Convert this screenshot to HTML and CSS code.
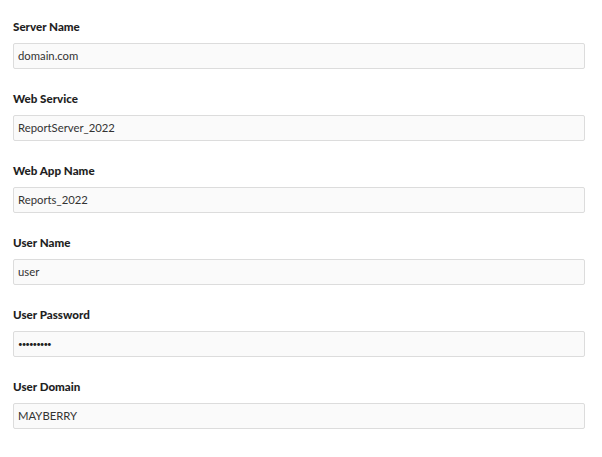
FILE: index.html
```html
<!DOCTYPE html>
<html>
<head>
<meta charset="utf-8">
<link rel="stylesheet" href="styles.css">
</head>
<body>
<form class="form">
  <div class="field">
    <label class="label">Server Name</label>
    <div class="input">domain.com</div>
  </div>
  <div class="field">
    <label class="label">Web Service</label>
    <div class="input">ReportServer_2022</div>
  </div>
  <div class="field">
    <label class="label">Web App Name</label>
    <div class="input">Reports_2022</div>
  </div>
  <div class="field">
    <label class="label">User Name</label>
    <div class="input">user</div>
  </div>
  <div class="field">
    <label class="label">User Password</label>
    <div class="input password">•••••••••</div>
  </div>
  <div class="field">
    <label class="label">User Domain</label>
    <div class="input">MAYBERRY</div>
  </div>
</form>
</body>
</html>
```

FILE: styles.css
```css
html, body {
  margin: 0;
  background: #ffffff;
}
body {
  font-family: Lato, "Open Sans", sans-serif;
  color: #222222;
}
.form {
  display: flex;
  flex-direction: column;
  gap: 22px;
  padding: 19px 17px 0 13px;
}
.field {
  display: flex;
  flex-direction: column;
  gap: 8px;
}
.label {
  font-size: 11.6px;
  font-weight: 900;
  line-height: 16px;
  color: #1f1f1f;
}
.input {
  box-sizing: border-box;
  height: 26px;
  border: 1px solid #dcdcdc;
  border-radius: 2px;
  background: #fafafa;
  padding: 0 4px;
  font-size: 11.3px;
  line-height: 24px;
  color: #333333;
}
.password {
  font-size: 8px;
  letter-spacing: -1px;
  color: #222222;
}
```
